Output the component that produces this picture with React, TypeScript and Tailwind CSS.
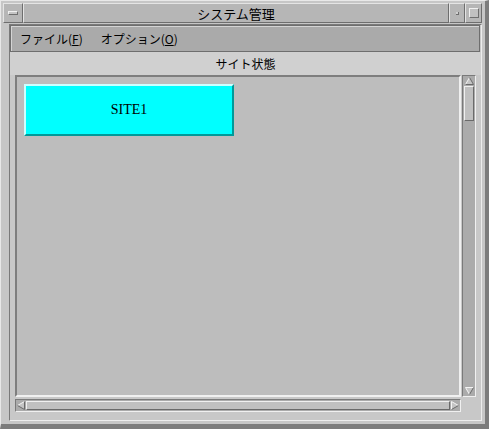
import React from "react";

const jp = "font-['Noto_Sans_CJK_JP','Noto_Sans',sans-serif]";

function ArrowUp() {
  return (
    <svg width="9" height="8" viewBox="0 0 9 8" className="block">
      <polygon points="4.5,0.5 8.5,7.5 0.5,7.5" fill="#c4c4c4" />
      <line x1="4.5" y1="0.5" x2="0.5" y2="7.5" stroke="#f4f4f4" strokeWidth="1" />
      <line x1="4.5" y1="0.5" x2="8.5" y2="7.5" stroke="#6a6a6a" strokeWidth="1" />
      <line x1="0.5" y1="7.5" x2="8.5" y2="7.5" stroke="#6a6a6a" strokeWidth="1" />
    </svg>
  );
}
function ArrowDown() {
  return (
    <svg width="9" height="8" viewBox="0 0 9 8" className="block">
      <polygon points="0.5,0.5 8.5,0.5 4.5,7.5" fill="#c4c4c4" />
      <line x1="0.5" y1="0.5" x2="8.5" y2="0.5" stroke="#f4f4f4" strokeWidth="1" />
      <line x1="0.5" y1="0.5" x2="4.5" y2="7.5" stroke="#f4f4f4" strokeWidth="1" />
      <line x1="8.5" y1="0.5" x2="4.5" y2="7.5" stroke="#6a6a6a" strokeWidth="1" />
    </svg>
  );
}
function ArrowLeft() {
  return (
    <svg width="8" height="9" viewBox="0 0 8 9" className="block">
      <polygon points="0.5,4.5 7.5,0.5 7.5,8.5" fill="#c4c4c4" />
      <line x1="0.5" y1="4.5" x2="7.5" y2="0.5" stroke="#f4f4f4" strokeWidth="1" />
      <line x1="0.5" y1="4.5" x2="7.5" y2="8.5" stroke="#6a6a6a" strokeWidth="1" />
      <line x1="7.5" y1="0.5" x2="7.5" y2="8.5" stroke="#6a6a6a" strokeWidth="1" />
    </svg>
  );
}
function ArrowRight() {
  return (
    <svg width="8" height="9" viewBox="0 0 8 9" className="block">
      <polygon points="0.5,0.5 7.5,4.5 0.5,8.5" fill="#c4c4c4" />
      <line x1="0.5" y1="0.5" x2="0.5" y2="8.5" stroke="#f4f4f4" strokeWidth="1" />
      <line x1="0.5" y1="0.5" x2="7.5" y2="4.5" stroke="#f4f4f4" strokeWidth="1" />
      <line x1="0.5" y1="8.5" x2="7.5" y2="4.5" stroke="#6a6a6a" strokeWidth="1" />
    </svg>
  );
}

export default function App() {
  return (
    <div className="w-[489px] h-[429px] box-border bg-[#c6c6c6] border-t border-l border-t-[#e8e8e8] border-l-[#e8e8e8] border-r-[4px] border-b-[5px] border-r-[#7c7c7c] border-b-[#7c7c7c] flex flex-col pt-[2px] pl-[2px] pr-[3px] pb-[3px]">
      {/* title bar */}
      <div className="h-[20px] flex bg-[#b6b6b6]">
        <div className="w-[20px] h-full border-t border-l border-t-[#e4e4e4] border-l-[#e4e4e4] border-b border-r border-b-[#6e6e6e] border-r-[#6e6e6e] flex items-center justify-center">
          <div className="w-[10px] h-[4px] bg-[#c4c4c4] border-t border-l border-t-[#f0f0f0] border-l-[#f0f0f0] border-b border-r border-b-[#6e6e6e] border-r-[#6e6e6e]" />
        </div>
        <div className={`flex-1 h-full border-t border-l border-t-[#e4e4e4] border-l-[#e4e4e4] border-b border-r border-b-[#6e6e6e] border-r-[#6e6e6e] flex items-center justify-center text-[13px] leading-none text-black ${jp}`}>
          システム管理
        </div>
        <div className="w-[16px] h-full border-t border-l border-t-[#e4e4e4] border-l-[#e4e4e4] border-b border-r border-b-[#6e6e6e] border-r-[#6e6e6e] flex items-center justify-center">
          <div className="w-[3px] h-[3px] bg-[#d0d0d0] border-r border-b border-r-[#6e6e6e] border-b-[#6e6e6e]" />
        </div>
        <div className="w-[17px] h-full border-t border-l border-t-[#e4e4e4] border-l-[#e4e4e4] border-b border-r border-b-[#6e6e6e] border-r-[#6e6e6e] flex items-center justify-center">
          <div className="w-[10px] h-[10px] bg-[#c0c0c0] border-t border-l border-t-[#f0f0f0] border-l-[#f0f0f0] border-b border-r border-b-[#6e6e6e] border-r-[#6e6e6e]" />
        </div>
      </div>

      {/* client */}
      <div className="mt-[1px] ml-[6px] flex-1 flex flex-col bg-[#c8c8c8] border-t border-l border-t-[#7a7a7a] border-l-[#7a7a7a] border-b border-r border-b-[#ececec] border-r-[#ececec]">
        {/* menu bar */}
        <div className={`h-[27px] mr-[1px] flex items-center bg-[#aaaaaa] border border-[#6e6e6e] shadow-[inset_1px_1px_0_#d4d4d4] text-[12px] leading-none text-black ${jp}`}>
          <span className="ml-[9px]">ファイル(<span className="underline">F</span>)</span>
          <span className="ml-[18px]">オプション(<span className="underline">O</span>)</span>
        </div>
        {/* label */}
        <div className={`h-[23px] flex items-center justify-center bg-[#d0d0d0] text-[12px] leading-none text-black ${jp}`}>
          サイト状態
        </div>
        {/* scrolled window */}
        <div className="ml-[5px] mr-[1px] h-[337px] grid grid-cols-[446px_14px] grid-rows-[322px_13px] gap-x-[1px] gap-y-[2px]">
          {/* content */}
          <div className="border-t-2 border-l-2 border-t-[#7e7e7e] border-l-[#7e7e7e] border-b-2 border-r-2 border-b-[#f0f0f0] border-r-[#f0f0f0] bg-[#bdbdbd] pt-[7px] pl-[7px] flex items-start">
            <div className="w-[210px] h-[52px] box-border bg-[#00ffff] border-t-2 border-l-2 border-t-[#ccffff] border-l-[#ccffff] border-b-2 border-r-2 border-b-[#009999] border-r-[#009999] flex items-center justify-center font-['Liberation_Serif',serif] text-[14px] leading-none text-black">
              SITE1
            </div>
          </div>
          {/* vertical scrollbar */}
          <div className="bg-[#ababab] border-t border-l border-t-[#7a7a7a] border-l-[#7a7a7a] border-b border-r border-b-[#f0f0f0] border-r-[#f0f0f0] flex flex-col items-center py-[1px]">
            <ArrowUp />
            <div className="mt-[1px] w-[10px] h-[35px] bg-[#c0c0c0] border-t border-l border-t-[#f0f0f0] border-l-[#f0f0f0] border-b border-r border-b-[#6a6a6a] border-r-[#6a6a6a]" />
            <div className="flex-1" />
            <ArrowDown />
          </div>
          {/* horizontal scrollbar */}
          <div className="bg-[#ababab] border-t border-l border-t-[#7a7a7a] border-l-[#7a7a7a] border-b border-r border-b-[#f0f0f0] border-r-[#f0f0f0] flex items-center px-[1px]">
            <ArrowLeft />
            <div className="ml-[1px] mr-[1px] flex-1 h-[9px] bg-[#c0c0c0] border-t border-l border-t-[#f0f0f0] border-l-[#f0f0f0] border-b border-r border-b-[#6a6a6a] border-r-[#6a6a6a]" />
            <ArrowRight />
          </div>
          <div />
        </div>
      </div>
    </div>
  );
}
